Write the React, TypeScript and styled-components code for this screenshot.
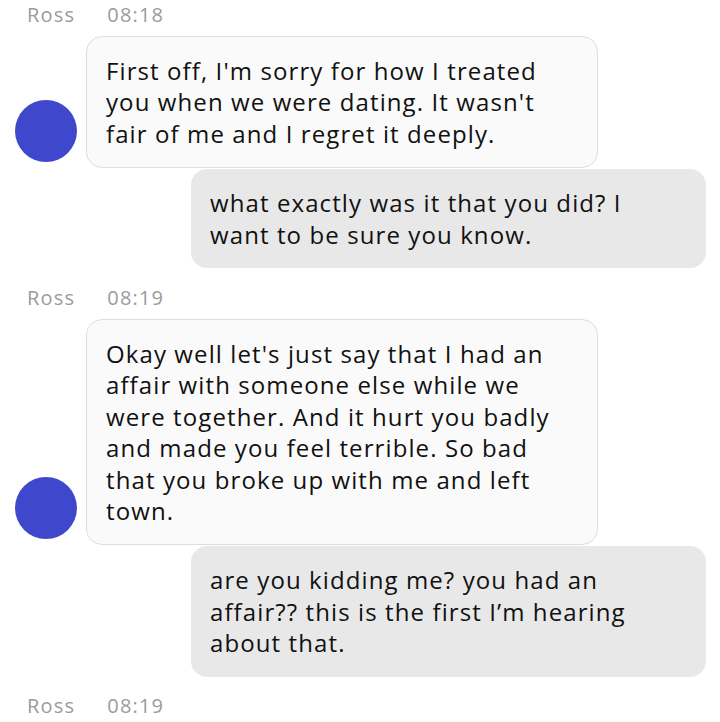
import React from 'react';
import styled, { createGlobalStyle } from 'styled-components';

const GlobalStyle = createGlobalStyle`
  html, body {
    margin: 0;
    padding: 0;
    background: #ffffff;
  }
  body {
    font-family: "Open Sans", "Liberation Sans", sans-serif;
  }
`;

const Thread = styled.div`
  width: 720px;
  height: 722px;
  overflow: hidden;
  padding: 2px 14px 0 15px;
  box-sizing: border-box;
  display: flex;
  flex-direction: column;
`;

const Header = styled.div<{ $first?: boolean }>`
  display: flex;
  align-items: center;
  gap: 32px;
  height: 24px;
  margin: ${(p) => (p.$first ? '0' : '17px')} 0 10px 12px;
  font-size: 20px;
  color: #9b9b9b;
  letter-spacing: 1.2px;
`;

const IncomingRow = styled.div`
  display: flex;
  align-items: flex-end;
  gap: 9px;
`;

const Avatar = styled.div`
  width: 62px;
  height: 62px;
  border-radius: 50%;
  background: #3f48cc;
  flex-shrink: 0;
  margin-bottom: 6px;
`;

const Bubble = styled.div<{ $out?: boolean }>`
  box-sizing: border-box;
  width: ${(p) => (p.$out ? '515px' : '512px')};
  padding: 18px 19px;
  border-radius: 16px;
  background: ${(p) => (p.$out ? '#e8e8e8' : '#fafafa')};
  border: ${(p) => (p.$out ? 'none' : '1px solid #dedede')};
  color: #111111;
  font-size: 24px;
  line-height: 31.4px;
  letter-spacing: 1.1px;
`;

const OutgoingRow = styled.div`
  display: flex;
  justify-content: flex-end;
  margin-top: 1px;
`;

const Line = styled.span`
  display: block;
  white-space: nowrap;
`;

type Msg = { from: 'in' | 'out'; lines: string[] };
type Group = { name: string; time: string; msgs: Msg[] };

const groups: Group[] = [
  {
    name: 'Ross',
    time: '08:18',
    msgs: [
      {
        from: 'in',
        lines: [
          "First off, I'm sorry for how I treated",
          "you when we were dating. It wasn't",
          'fair of me and I regret it deeply.',
        ],
      },
      {
        from: 'out',
        lines: ['what exactly was it that you did? I', 'want to be sure you know.'],
      },
    ],
  },
  {
    name: 'Ross',
    time: '08:19',
    msgs: [
      {
        from: 'in',
        lines: [
          "Okay well let's just say that I had an",
          'affair with someone else while we',
          'were together. And it hurt you badly',
          'and made you feel terrible. So bad',
          'that you broke up with me and left',
          'town.',
        ],
      },
      {
        from: 'out',
        lines: [
          'are you kidding me? you had an',
          'affair?? this is the first I\u2019m hearing',
          'about that.',
        ],
      },
    ],
  },
  { name: 'Ross', time: '08:19', msgs: [] },
];

function MessageText({ lines }: { lines: string[] }) {
  return (
    <>
      {lines.map((l, i) => (
        <Line key={i}>{l}</Line>
      ))}
    </>
  );
}

export default function App() {
  return (
    <>
      <GlobalStyle />
      <Thread>
        {groups.map((g, gi) => (
          <React.Fragment key={gi}>
            <Header $first={gi === 0}>
              <span>{g.name}</span>
              <span>{g.time}</span>
            </Header>
            {g.msgs.map((m, mi) =>
              m.from === 'in' ? (
                <IncomingRow key={mi}>
                  <Avatar />
                  <Bubble>
                    <MessageText lines={m.lines} />
                  </Bubble>
                </IncomingRow>
              ) : (
                <OutgoingRow key={mi}>
                  <Bubble $out>
                    <MessageText lines={m.lines} />
                  </Bubble>
                </OutgoingRow>
              )
            )}
          </React.Fragment>
        ))}
      </Thread>
    </>
  );
}
